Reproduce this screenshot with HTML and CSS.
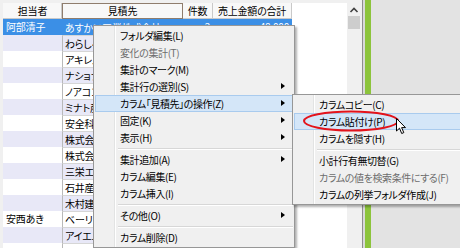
FILE: index.html
```html
<!DOCTYPE html>
<html lang="ja">
<head>
<meta charset="utf-8">
<link rel="stylesheet" href="styles.css">
</head>
<body>
<div class="app">
  <div class="panel">
    <div class="grid">
      <div class="row head">
        <div class="c c1">担当者</div><div class="c c2 sortcol">見積先</div><div class="c c3">件数</div><div class="c c4">売上金額の合計</div>
      </div>
      <div class="row selrow"><div class="c c1">阿部清子</div><div class="c c2">あすかい工業株式会社</div><div class="c c3 num">2</div><div class="c c4 num">48,000</div></div>
      <div class="row alt"><div class="c c1"></div><div class="c c2">わらしべ商事</div><div class="c c3"></div><div class="c c4"></div></div>
      <div class="row"><div class="c c1"></div><div class="c c2">アキレス工業</div><div class="c c3"></div><div class="c c4"></div></div>
      <div class="row alt"><div class="c c1"></div><div class="c c2">ナショナル物産</div><div class="c c3"></div><div class="c c4"></div></div>
      <div class="row"><div class="c c1"></div><div class="c c2">ノアコンサルタント</div><div class="c c3"></div><div class="c c4"></div></div>
      <div class="row alt"><div class="c c1"></div><div class="c c2">ミナト産業</div><div class="c c3"></div><div class="c c4"></div></div>
      <div class="row"><div class="c c1"></div><div class="c c2">安全科学研究所</div><div class="c c3"></div><div class="c c4"></div></div>
      <div class="row alt"><div class="c c1"></div><div class="c c2">株式会社アルファ</div><div class="c c3"></div><div class="c c4"></div></div>
      <div class="row"><div class="c c1"></div><div class="c c2">株式会社ベスト</div><div class="c c3"></div><div class="c c4"></div></div>
      <div class="row alt"><div class="c c1"></div><div class="c c2">三栄エンジニアリング</div><div class="c c3"></div><div class="c c4"></div></div>
      <div class="row"><div class="c c1"></div><div class="c c2">石井産業</div><div class="c c3"></div><div class="c c4"></div></div>
      <div class="row alt"><div class="c c1"></div><div class="c c2">木村建設</div><div class="c c3"></div><div class="c c4"></div></div>
      <div class="row"><div class="c c1">安西あき</div><div class="c c2">ベーリング商会</div><div class="c c3"></div><div class="c c4"></div></div>
      <div class="row alt"><div class="c c1"></div><div class="c c2">アイエム技研</div><div class="c c3"></div><div class="c c4"></div></div>
      <div class="row"><div class="c c1"></div><div class="c c2"></div><div class="c c3"></div><div class="c c4"></div></div>
    </div>
    <div class="vscroll">
      <div class="vbtn"><svg width="14" height="13" viewBox="0 0 14 13"><polyline points="3.5,9 7,5.5 10.5,9" fill="none" stroke="#404040" stroke-width="1.6"/></svg></div>
      <div class="thumb"></div>
    </div>
  </div>
  <div class="edge"></div>
  <div class="green"></div>
  <div class="rest"></div>
</div>

<div class="menu mainmenu">
  <div class="item">フォルダ編集(L)</div>
  <div class="item dis">変化の集計(T)</div>
  <div class="item">集計のマーク(M)</div>
  <div class="item sub">集計行の選別(S)</div>
  <div class="item sub hl">カラム「見積先」の操作(Z)</div>
  <div class="item sub">固定(K)</div>
  <div class="item sub">表示(H)</div>
  <div class="sep"></div>
  <div class="item sub">集計追加(A)</div>
  <div class="item">カラム編集(E)</div>
  <div class="item">カラム挿入(I)</div>
  <div class="sep"></div>
  <div class="item sub">その他(O)</div>
  <div class="sep"></div>
  <div class="item">カラム削除(D)</div>
</div>

<div class="menu submenu">
  <div class="item">カラムコピー(C)</div>
  <div class="item hl">カラム貼付け(P)</div>
  <div class="item">カラムを隠す(H)</div>
  <div class="sep"></div>
  <div class="item">小計行有無切替(G)</div>
  <div class="item dis">カラムの値を検索条件にする(F)</div>
  <div class="item">カラムの列挙フォルダ作成(J)</div>
</div>

<svg class="ring" width="98" height="22" viewBox="0 0 98 22"><ellipse cx="49" cy="11" rx="47" ry="9.5" fill="none" stroke="#e3131b" stroke-width="2"/></svg>

<svg class="cursor" width="11" height="17" viewBox="0 0 11 17"><path d="M0.5 0.5 L0.5 13 L3.5 10.2 L5.7 15.5 L7.8 14.6 L5.6 9.6 L9.5 9.6 Z" fill="#fff" stroke="#000" stroke-width="1" stroke-linejoin="round"/></svg>
</body>
</html>
```

FILE: styles.css
```css
html, body {
  margin: 0;
  padding: 0;
}
body {
  width: 460px;
  height: 248px;
  overflow: hidden;
  position: relative;
  background: #e3e3e3;
  font-family: "Noto Sans CJK JP", "Noto Sans", sans-serif;
  font-size: 10px;
  font-feature-settings: "palt";
  color: #000;
}
.app {
  display: flex;
  height: 248px;
}
.panel {
  display: flex;
  width: 362px;
  box-sizing: border-box;
  padding: 3px 1px 0 3px;
  background: #f0f0f0;
}
.grid {
  width: 344px;
  background: #fff;
  display: flex;
  flex-direction: column;
  overflow: hidden;
}
.row {
  display: grid;
  grid-template-columns: 59px 121px 30px 79px;
  width: 289px;
  height: 16px;
  flex: none;
}
.c {
  overflow: hidden;
  white-space: nowrap;
  line-height: 16px;
  padding: 0 2px;
  box-sizing: border-box;
  letter-spacing: -0.2px;
}
.row.head .c {
  background: #f8f8f8;
  border-right: 1px solid #c9c9c9;
  border-bottom: 1px solid #c9c9c9;
  text-align: center;
  line-height: 15px;
}
.row.head .c.sortcol {
  border: 1px solid #8f7d6d;
  line-height: 14px;
}
.row .c2 {
  border-left: 1px solid #b9b9b9;
  border-top: 1px solid #d6d6d6;
  line-height: 15px;
  padding-left: 2px;
}
.row.head .c2 { border-top: 1px solid #8f7d6d; }
.row.alt { background: #e8e8f7; }
.row.selrow {
  background: #3b8fe6;
  color: #fff;
}
.row.selrow .c2 { border-color: #3b8fe6; }
.c1 { padding-left: 3px; }
.num { text-align: right; padding-right: 3px; }

.vscroll {
  width: 14px;
  background: #f0f0f0;
  display: flex;
  flex-direction: column;
}
.vbtn {
  height: 13px;
  display: flex;
}
.thumb {
  margin: 0 1px;
  height: 13px;
  background: #cdcdcd;
}
.edge {
  width: 3px;
  background: linear-gradient(to right, #8e8e8e 0 1px, #d9d9d9 1px);
}
.green {
  width: 6px;
  background: #8cc43c;
}
.rest {
  flex: 1;
  background: #e3e3e3;
}

.menu {
  position: absolute;
  box-sizing: border-box;
  background-color: #f0f0f0;
  background-image: linear-gradient(to right, transparent 20px, #e2e3e3 20px, #e2e3e3 21px, #fff 21px, #fff 22px, transparent 22px);
  border: 1px solid #979797;
  padding: 1px;
  box-shadow: 2px 2px 2px rgba(0, 0, 0, 0.3);
}
.mainmenu {
  left: 93px;
  top: 25px;
  width: 202px;
}
.submenu {
  left: 292px;
  top: 94px;
  width: 172px;
}
.item {
  position: relative;
  height: 17px;
  line-height: 17px;
  padding-left: 25px;
  white-space: nowrap;
  box-sizing: border-box;
  letter-spacing: -0.4px;
}
.item.dis { color: #6d6d6d; }
.item.hl {
  background: #d4e6f8;
  box-shadow: inset 0 0 0 1px #a9cbee;
}
.item.sub::after {
  content: "";
  position: absolute;
  right: 8px;
  top: 5px;
  border-left: 4px solid #000;
  border-top: 3.5px solid transparent;
  border-bottom: 3.5px solid transparent;
}
.sep {
  height: 5px;
  margin-left: 23px;
  background: linear-gradient(to bottom, transparent 2px, #d7d7d7 2px, #d7d7d7 3px, #fff 3px, #fff 4px, transparent 4px);
}
.ring {
  position: absolute;
  left: 302px;
  top: 110px;
}
.cursor {
  position: absolute;
  left: 396px;
  top: 118px;
}
```
